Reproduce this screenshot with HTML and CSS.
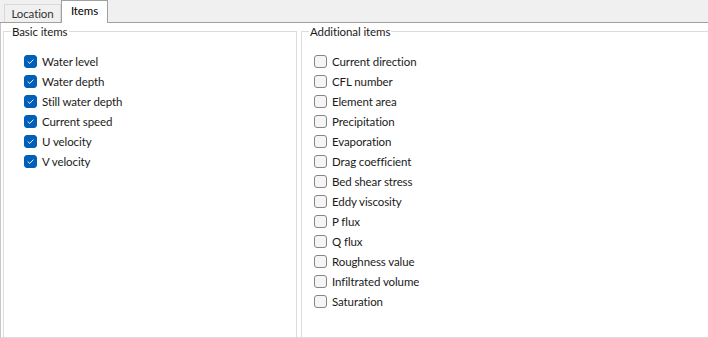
FILE: index.html
```html
<!DOCTYPE html>
<html lang="en">
<head>
    <meta charset="UTF-8">
    <title>Output items</title>
    <link rel="stylesheet" href="styles.css">
</head>
<body>
    <div class="tabs">
        <div class="tab">Location</div>
        <div class="tab active">Items</div>
    </div>

    <div class="panel">
        <fieldset class="group basic">
            <legend>Basic items</legend>
            <div class="items">
                <label class="check"><span class="box on"><svg viewBox="0 0 13 13"><path d="M3.5 6.8 L5.6 8.8 L9.6 4.6"/></svg></span>Water level</label>
                <label class="check"><span class="box on"><svg viewBox="0 0 13 13"><path d="M3.5 6.8 L5.6 8.8 L9.6 4.6"/></svg></span>Water depth</label>
                <label class="check"><span class="box on"><svg viewBox="0 0 13 13"><path d="M3.5 6.8 L5.6 8.8 L9.6 4.6"/></svg></span>Still water depth</label>
                <label class="check"><span class="box on"><svg viewBox="0 0 13 13"><path d="M3.5 6.8 L5.6 8.8 L9.6 4.6"/></svg></span>Current speed</label>
                <label class="check"><span class="box on"><svg viewBox="0 0 13 13"><path d="M3.5 6.8 L5.6 8.8 L9.6 4.6"/></svg></span>U velocity</label>
                <label class="check"><span class="box on"><svg viewBox="0 0 13 13"><path d="M3.5 6.8 L5.6 8.8 L9.6 4.6"/></svg></span>V velocity</label>
            </div>
        </fieldset>

        <fieldset class="group additional">
            <legend>Additional items</legend>
            <div class="items">
                <label class="check"><span class="box"></span>Current direction</label>
                <label class="check"><span class="box"></span>CFL number</label>
                <label class="check"><span class="box"></span>Element area</label>
                <label class="check"><span class="box"></span>Precipitation</label>
                <label class="check"><span class="box"></span>Evaporation</label>
                <label class="check"><span class="box"></span>Drag coefficient</label>
                <label class="check"><span class="box"></span>Bed shear stress</label>
                <label class="check"><span class="box"></span>Eddy viscosity</label>
                <label class="check"><span class="box"></span>P flux</label>
                <label class="check"><span class="box"></span>Q flux</label>
                <label class="check"><span class="box"></span>Roughness value</label>
                <label class="check"><span class="box"></span>Infiltrated volume</label>
                <label class="check"><span class="box"></span>Saturation</label>
            </div>
        </fieldset>
    </div>
</body>
</html>
```

FILE: styles.css
```css
* {
    margin: 0;
    padding: 0;
    box-sizing: border-box;
}

body {
    font-family: Lato, "Noto Sans", sans-serif;
    font-size: 11.5px;
    letter-spacing: -0.1px;
    color: #1a1a1a;
    background: #fff;
    width: 708px;
    height: 338px;
    overflow: hidden;
}

.tabs {
    height: 23px;
    background: #f0f0f0;
    border-bottom: 1px solid #a0a0a0;
    display: flex;
    align-items: flex-end;
    padding-left: 4px;
}

.tab {
    width: 57px;
    height: 18px;
    text-align: center;
    line-height: 17px;
    background: #f0f0f0;
    border: 1px solid #d9d9d9;
    border-bottom: none;
    color: #333;
}

.tab.active {
    width: 47px;
    height: 23px;
    margin-bottom: -1px;
    background: #fff;
    border-color: #a0a0a0;
    line-height: 20px;
    color: #000;
}

.panel {
    display: flex;
    gap: 4px;
    height: 315px;
    padding: 1px 0 0 2px;
    border-left: 1px solid #c8c8c8;
    border-bottom: 1px solid #dcdcdc;
}

.group {
    border: 1px solid #dcdcdc;
    border-bottom: none;
    padding: 0 0 0 7px;
}

.group legend {
    padding: 0 1px;
    line-height: 15px;
}

.basic {
    width: 294px;
}

.additional {
    flex: 1;
    margin-right: -4px;
}

.items {
    display: flex;
    flex-direction: column;
    padding-top: 12px;
}

.basic .items {
    padding-left: 13px;
}

.additional .items {
    padding-left: 5px;
}

.check {
    display: flex;
    align-items: center;
    gap: 5px;
    height: 20px;
}

.box {
    width: 13px;
    height: 13px;
    border: 1px solid #858585;
    border-radius: 3px;
    background: #f5f5f5;
    display: flex;
}

.box.on {
    background: #005fb8;
    border-color: #005fb8;
}

.box svg {
    width: 11px;
    height: 11px;
}

.box svg path {
    fill: none;
    stroke: #fff;
    stroke-width: 1.1;
    stroke-linecap: round;
    stroke-linejoin: round;
}
```
